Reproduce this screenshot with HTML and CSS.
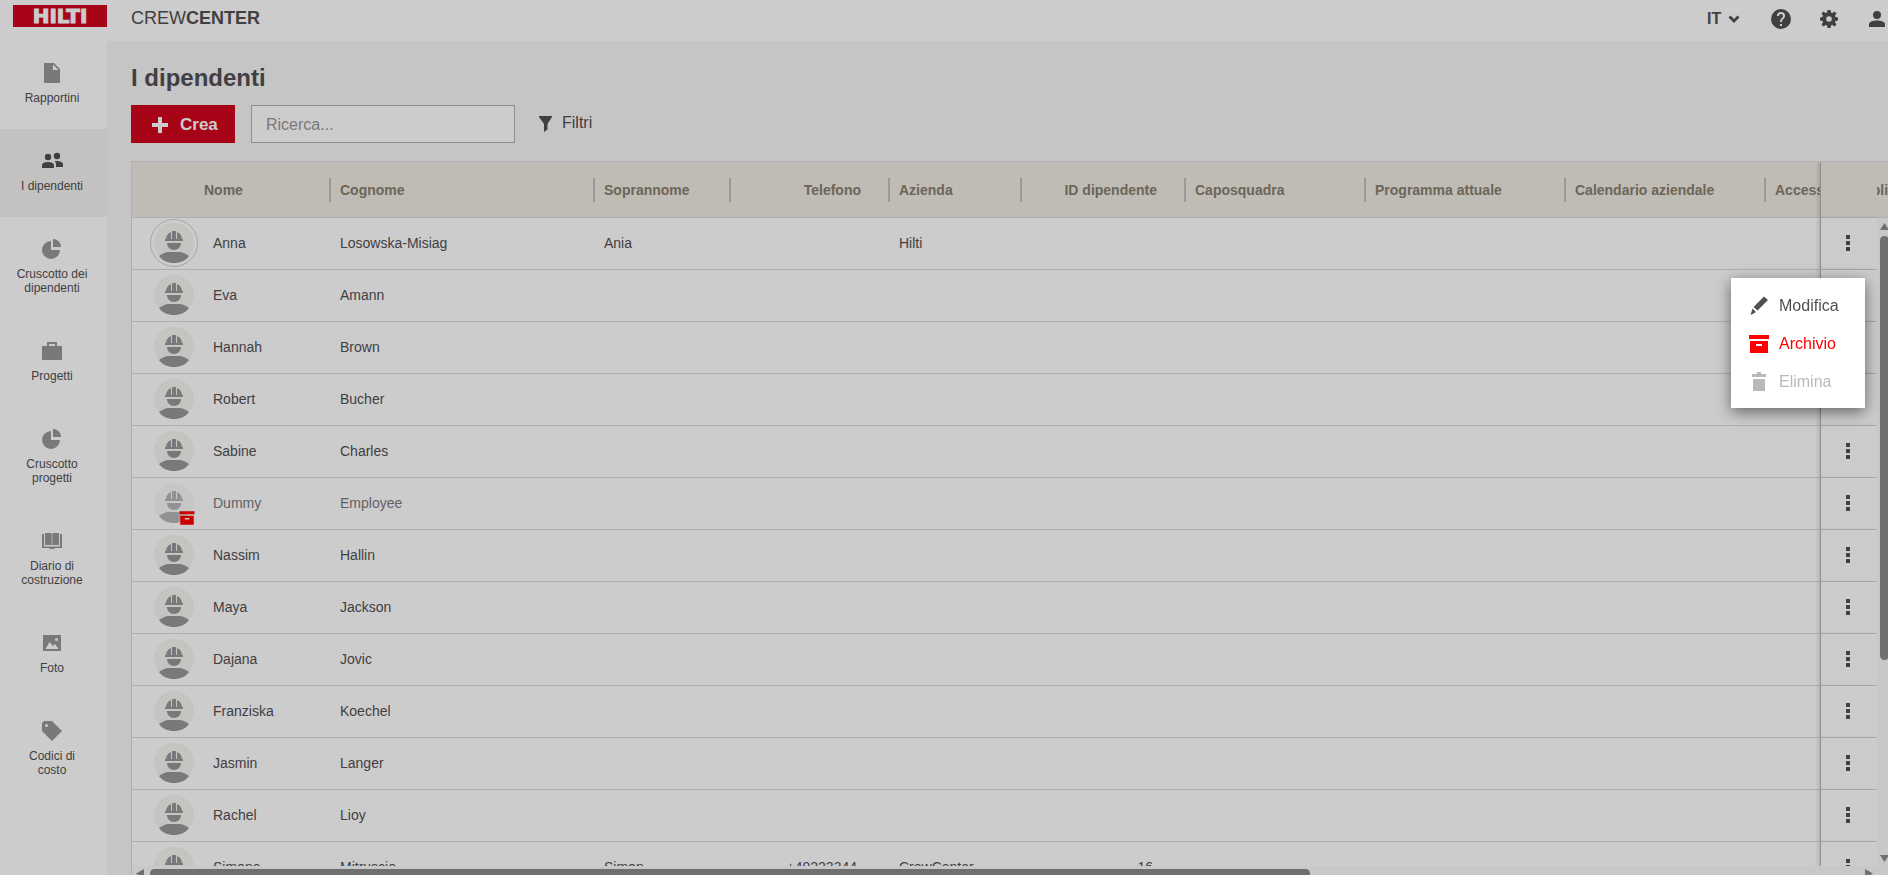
FILE: index.html
```html
<!DOCTYPE html>
<html lang="it">
<head>
  <meta charset="UTF-8">
  <meta name="viewport" content="width=device-width, initial-scale=1.0">
  <title>CrewCenter</title>
  <link rel="stylesheet" href="styles.css">
</head>
<body>

  <!-- Icone condivise -->
  <svg class="sprite" aria-hidden="true">
    <symbol id="avatar" viewBox="0 0 40 40">
      <circle cx="20" cy="20" r="20" fill="#f5f5f2"/>
      <path d="M12 16c.2-3 2-5.500 4-6.500h2V8h4v1.500h2c2 1 3.800 3.500 4 6.500h1v2H11v-2z" fill="#9a979b"/>
      <path d="M17.500 9v7M22.500 9v7" stroke="#f5f5f2" stroke-width="1"/>
      <path d="M13 20h14c0 4-3 7-7 7s-7-3-7-7z" fill="#9a979b"/>
      <path d="M5 33c3-2 7-4 9-4h12c2 0 6 2 9 4-3 4.500-9 7-15 7S8 37.500 5 33z" fill="#9a979b"/>
    </symbol>
    <symbol id="pie" viewBox="0 0 24 24">
      <path d="M11 4v9h9a9 9 0 1 1-9-9z"/><path d="M13 2a8 8 0 0 1 8 8h-8z"/>
    </symbol>
    <symbol id="archive" viewBox="0 0 24 24">
      <path d="M2 3h20v4H2z"/><path d="M3 9h18v12H3zm6 3v2h6v-2z" fill-rule="evenodd"/>
    </symbol>
    <symbol id="dots" viewBox="0 0 24 24">
      <path d="M10 4h4v4h-4zM10 10h4v4h-4zM10 16h4v4h-4z"/>
    </symbol>
  </svg>

  <div class="app">
    <header class="topbar">
      <a class="logo" href="#">HILTI</a>
      <div class="brand">CREW<b>CENTER</b></div>
      <div class="tools">
        <div class="lang">
          <select aria-label="Lingua"><option>IT</option></select>
          <svg class="chevron" viewBox="0 0 14 14"><path d="M2.500 4.500L7 9l4.500-4.500" fill="none" stroke="currentColor" stroke-width="2.800"/></svg>
        </div>
        <button class="tool" aria-label="Aiuto">
          <svg class="icon" viewBox="0 0 24 24"><path d="M12 2a10 10 0 1 0 0 20 10 10 0 0 0 0-20zm1 17h-2v-2h2zm2.070-7.750l-.9.920C13.450 12.900 13 13.500 13 15h-2v-.5c0-1.100.450-2.100 1.170-2.830l1.240-1.260A2 2 0 1 0 10 9H8a4 4 0 1 1 8 0c0 .880-.360 1.680-.930 2.250z"/></svg>
        </button>
        <button class="tool" aria-label="Impostazioni">
          <svg class="icon" viewBox="0 0 24 24"><path fill-rule="evenodd" d="M10.500 3h3l.5 2.600 1.300.5 2.200-1.500 2 2-1.500 2.200.5 1.200 2.500.5v3l-2.500.5-.5 1.200 1.500 2.200-2 2-2.200-1.500-1.300.5-.5 2.600h-3l-.5-2.600-1.300-.5-2.200 1.500-2-2L6 15.200 5.500 14 3 13.500v-3l2.500-.5.5-1.200-1.500-2.200 2-2 2.200 1.500 1.300-.5zM12 9.200a2.800 2.800 0 1 0 0 5.600 2.800 2.800 0 0 0 0-5.600z"/></svg>
        </button>
        <button class="tool" aria-label="Profilo">
          <svg class="icon" viewBox="0 0 24 24"><circle cx="12" cy="8" r="4"/><path d="M4 20v-3c0-2 4-3.500 8-3.500s8 1.500 8 3.500v3z"/></svg>
        </button>
      </div>
    </header>

    <nav class="sidebar">
      <a href="#" class="nav-item">
        <svg class="icon" viewBox="0 0 24 24"><path fill-rule="evenodd" d="M4 2h10l6 6v14H4zm9 1.500V9h5.500z"/></svg>
        <span>Rapportini</span>
      </a>
      <a href="#" class="nav-item active">
        <svg class="icon" viewBox="0 0 24 24"><circle cx="8" cy="8" r="3.200"/><circle cx="17" cy="7" r="3.200"/><path d="M2 19v-3c0-2 3-3 6-3s6 1 6 3v3zM14.500 12c4-.5 8.500.5 8.500 3v3h-7v-2.500c0-1.500-.5-2.500-1.500-3.500z"/></svg>
        <span>I dipendenti</span>
      </a>
      <a href="#" class="nav-item">
        <svg class="icon"><use href="#pie"/></svg>
        <span>Cruscotto dei dipendenti</span>
      </a>
      <a href="#" class="nav-item">
        <svg class="icon" viewBox="0 0 24 24"><path fill-rule="evenodd" d="M7 3h10v4h5v14H2V7h5zm2 2v2h6V5z"/></svg>
        <span>Progetti</span>
      </a>
      <a href="#" class="nav-item">
        <svg class="icon"><use href="#pie"/></svg>
        <span>Cruscotto progetti</span>
      </a>
      <a href="#" class="nav-item">
        <svg class="icon" viewBox="0 0 24 24"><path d="M5 4h6l.7.7V16H5zM19 4h-6l-.7.700V16H19zM2 5h2v12.500h16V5h2v14h-7l-1 1h-4l-1-1H2z"/></svg>
        <span>Diario di costruzione</span>
      </a>
      <a href="#" class="nav-item">
        <svg class="icon" viewBox="0 0 24 24"><path fill-rule="evenodd" d="M3 4h18v16H3zm2.500 14h13L15 13l-2 2-3.500-4zM16.500 7a1.500 1.500 0 1 0 0 3 1.500 1.500 0 0 0 0-3z"/></svg>
        <span>Foto</span>
      </a>
      <a href="#" class="nav-item">
        <svg class="icon" viewBox="0 0 24 24"><path fill-rule="evenodd" d="M4 2h8l10 10-10 10L2 12V4zm2.500 3a1.500 1.500 0 1 0 0 3 1.500 1.500 0 0 0 0-3z"/></svg>
        <span>Codici di costo</span>
      </a>
    </nav>

    <main class="content">
      <h1>I dipendenti</h1>

      <div class="toolbar">
        <button class="btn-create">
          <svg class="plus" viewBox="0 0 16 16"><path d="M6 0h4v6h6v4h-6v6H6v-6H0V6h6z"/></svg>
          Crea
        </button>
        <input class="search" type="text" placeholder="Ricerca..." aria-label="Ricerca">
        <button class="btn-filter">
          <svg class="icon" viewBox="0 0 24 24"><path d="M6 5h13v1l-4.500 7v5.500L11 21v-8L6 6z"/></svg>
          Filtri
        </button>
      </div>

      <div class="grid">
        <div class="grid-view">
          <table>
            <colgroup>
              <col class="w-name"><col class="w-surname"><col class="w-nick"><col class="w-phone"><col class="w-company">
              <col class="w-id"><col class="w-foreman"><col class="w-wide"><col class="w-wide"><col class="w-wide"><col class="w-menu">
            </colgroup>
            <thead>
              <tr>
                <th class="first">Nome</th>
                <th>Cognome</th>
                <th>Soprannome</th>
                <th class="num">Telefono</th>
                <th>Azienda</th>
                <th class="num">ID dipendente</th>
                <th>Caposquadra</th>
                <th>Programma attuale</th>
                <th>Calendario aziendale</th>
                <th>Accesso all'applicazione</th>
                <th class="pinned"></th>
              </tr>
            </thead>
            <tbody>
              <tr>
                <td><div class="person"><span class="avatar ring"><svg><use href="#avatar"/></svg></span>Anna</div></td>
                <td>Losowska-Misiag</td><td>Ania</td><td></td><td>Hilti</td><td></td><td></td><td></td><td></td><td></td>
                <td class="pinned"><button aria-label="Azioni"><svg class="icon"><use href="#dots"/></svg></button></td>
              </tr>
              <tr>
                <td><div class="person"><span class="avatar"><svg><use href="#avatar"/></svg></span>Eva</div></td>
                <td>Amann</td><td></td><td></td><td></td><td></td><td></td><td></td><td></td><td></td>
                <td class="pinned"><button aria-label="Azioni"><svg class="icon"><use href="#dots"/></svg></button></td>
              </tr>
              <tr>
                <td><div class="person"><span class="avatar"><svg><use href="#avatar"/></svg></span>Hannah</div></td>
                <td>Brown</td><td></td><td></td><td></td><td></td><td></td><td></td><td></td><td></td>
                <td class="pinned"><button aria-label="Azioni"><svg class="icon"><use href="#dots"/></svg></button></td>
              </tr>
              <tr>
                <td><div class="person"><span class="avatar"><svg><use href="#avatar"/></svg></span>Robert</div></td>
                <td>Bucher</td><td></td><td></td><td></td><td></td><td></td><td></td><td></td><td></td>
                <td class="pinned"><button aria-label="Azioni"><svg class="icon"><use href="#dots"/></svg></button></td>
              </tr>
              <tr>
                <td><div class="person"><span class="avatar"><svg><use href="#avatar"/></svg></span>Sabine</div></td>
                <td>Charles</td><td></td><td></td><td></td><td></td><td></td><td></td><td></td><td></td>
                <td class="pinned"><button aria-label="Azioni"><svg class="icon"><use href="#dots"/></svg></button></td>
              </tr>
              <!-- Dipendente archiviato -->
              <tr class="archived">
                <td><div class="person"><span class="avatar"><svg><use href="#avatar"/></svg><svg class="badge"><use href="#archive"/></svg></span>Dummy</div></td>
                <td>Employee</td><td></td><td></td><td></td><td></td><td></td><td></td><td></td><td></td>
                <td class="pinned"><button aria-label="Azioni"><svg class="icon"><use href="#dots"/></svg></button></td>
              </tr>
              <tr>
                <td><div class="person"><span class="avatar"><svg><use href="#avatar"/></svg></span>Nassim</div></td>
                <td>Hallin</td><td></td><td></td><td></td><td></td><td></td><td></td><td></td><td></td>
                <td class="pinned"><button aria-label="Azioni"><svg class="icon"><use href="#dots"/></svg></button></td>
              </tr>
              <tr>
                <td><div class="person"><span class="avatar"><svg><use href="#avatar"/></svg></span>Maya</div></td>
                <td>Jackson</td><td></td><td></td><td></td><td></td><td></td><td></td><td></td><td></td>
                <td class="pinned"><button aria-label="Azioni"><svg class="icon"><use href="#dots"/></svg></button></td>
              </tr>
              <tr>
                <td><div class="person"><span class="avatar"><svg><use href="#avatar"/></svg></span>Dajana</div></td>
                <td>Jovic</td><td></td><td></td><td></td><td></td><td></td><td></td><td></td><td></td>
                <td class="pinned"><button aria-label="Azioni"><svg class="icon"><use href="#dots"/></svg></button></td>
              </tr>
              <tr>
                <td><div class="person"><span class="avatar"><svg><use href="#avatar"/></svg></span>Franziska</div></td>
                <td>Koechel</td><td></td><td></td><td></td><td></td><td></td><td></td><td></td><td></td>
                <td class="pinned"><button aria-label="Azioni"><svg class="icon"><use href="#dots"/></svg></button></td>
              </tr>
              <tr>
                <td><div class="person"><span class="avatar"><svg><use href="#avatar"/></svg></span>Jasmin</div></td>
                <td>Langer</td><td></td><td></td><td></td><td></td><td></td><td></td><td></td><td></td>
                <td class="pinned"><button aria-label="Azioni"><svg class="icon"><use href="#dots"/></svg></button></td>
              </tr>
              <tr>
                <td><div class="person"><span class="avatar"><svg><use href="#avatar"/></svg></span>Rachel</div></td>
                <td>Lioy</td><td></td><td></td><td></td><td></td><td></td><td></td><td></td><td></td>
                <td class="pinned"><button aria-label="Azioni"><svg class="icon"><use href="#dots"/></svg></button></td>
              </tr>
              <tr>
                <td><div class="person"><span class="avatar"><svg><use href="#avatar"/></svg></span>Simone</div></td>
                <td>Mitruscio</td><td>Simon</td><td class="num">+49223344</td><td>CrewCenter</td><td class="num">16</td><td></td><td></td><td></td><td></td>
                <td class="pinned"><button aria-label="Azioni"><svg class="icon"><use href="#dots"/></svg></button></td>
              </tr>
            </tbody>
          </table>
          <div class="vscroll">
            <i class="arrow up"></i><i class="thumb"></i><i class="arrow down"></i>
          </div>
        </div>
        <div class="hscroll">
          <i class="arrow left"></i><i class="thumb"></i><i class="arrow right"></i>
        </div>
      </div>
    </main>
  </div>

  <!-- Overlay -->
  <div class="overlay"></div>

  <!-- Menu azioni -->
  <div class="menu">
    <button>
      <svg class="icon" viewBox="0 0 24 24"><path d="M17 2.500l4 3.500L10.500 16.500l-4-3.500zM5.500 14.500l3.500 3.500-2 1.200L3.500 21z"/></svg>
      Modifica
    </button>
    <button class="danger">
      <svg class="icon"><use href="#archive"/></svg>
      Archivio
    </button>
    <button disabled>
      <svg class="icon" viewBox="0 0 24 24"><path d="M5 4h5V2h4v2h5v3H5zM6 9h12v12H6z"/></svg>
      Elimina
    </button>
  </div>

</body>
</html>
```
FILE: styles.css
```css
* {
  box-sizing: border-box;
}

body {
  margin: 0;
  overflow: hidden;
  font-family: "Liberation Sans", Arial, sans-serif;
  font-size: 14px;
  color: #524f53;
}

button {
  border: none;
  background: none;
  padding: 0;
  font: inherit;
  color: inherit;
  cursor: pointer;
}

.sprite {
  display: none;
}

.icon {
  display: block;
  flex: none;
  width: 24px;
  height: 24px;
  fill: currentColor;
}

/* Layout */
.app {
  display: grid;
  grid-template-columns: 107px minmax(0, 1fr);
  grid-template-rows: 41px minmax(0, 1fr);
  height: 100vh;
  background: #fff;
}

/* Barra superiore */
.topbar {
  grid-column: 1 / 3;
  display: flex;
  align-items: flex-start;
  padding-top: 5px;
}

.logo {
  display: flex;
  align-items: center;
  justify-content: center;
  width: 94px;
  height: 22px;
  margin-left: 13px;
  background: #d2051e;
  color: #fff;
  font: bold 20px/22px "DejaVu Sans", sans-serif;
  text-decoration: none;
  -webkit-text-stroke: 1px #fff;
}

.brand {
  margin-left: 24px;
  font-size: 18px;
  line-height: 26px;
}

.tools {
  display: flex;
  align-items: center;
  gap: 24px;
  height: 28px;
  margin: 0 -1px 0 auto;
}

.lang {
  display: flex;
  align-items: center;
}
.lang select {
  appearance: none;
  width: 20px;
  padding: 0;
  border: none;
  background: none;
  color: inherit;
  font: bold 16px/20px "Liberation Sans", Arial, sans-serif;
}

.chevron {
  width: 14px;
  height: 14px;
  margin-right: 4px;
}

/* Menu laterale */
.sidebar {
  overflow: hidden;
}

.nav-item {
  display: flex;
  flex-direction: column;
  align-items: center;
  gap: 6px;
  padding: 20px 15px 24px 12px;
  font-size: 12px;
  line-height: 14px;
  text-align: center;
  color: #524f53;
  text-decoration: none;
}
.nav-item .icon {
  color: #9a979b;
}
.nav-item span {
  width: 76px;
}
.nav-item.active {
  background: #f4f3f0;
}
.nav-item.active .icon {
  color: #524f53;
}

/* Contenuto */
.content {
  display: flex;
  flex-direction: column;
  min-height: 0;
  padding: 20px 0 0 24px;
  background: #f7f7f7;
}

h1 {
  margin: 0 0 10px;
  font-size: 24px;
  line-height: 34px;
}

.toolbar {
  display: flex;
  gap: 16px;
  margin-bottom: 18px;
  font-size: 16px;
}

.btn-create {
  display: flex;
  align-items: center;
  gap: 12px;
  width: 104px;
  height: 38px;
  padding: 1px 0 0 21px;
  background: #d2051e;
  color: #fff;
  font-size: 17px;
  font-weight: bold;
}

.plus {
  width: 16px;
  height: 16px;
  fill: #fff;
}

.search {
  width: 264px;
  height: 38px;
  padding: 2px 14px 0;
  border: 1px solid #b4b3b5;
  background: #fff;
  font: inherit;
}
.search::placeholder {
  color: #9a979b;
}

.btn-filter {
  display: flex;
  align-items: center;
  gap: 5px;
  padding: 0 0 2px 2px;
}

/* Tabella */
.grid {
  display: flex;
  flex: 1;
  flex-direction: column;
  min-height: 0;
  margin: 0 -4px -6px 0;
  border-top: 1px solid #dcdcda;
  border-left: 1px solid #dcdcda;
}

.grid-view {
  position: relative;
  flex: 1;
  min-height: 0;
  overflow: hidden;
  background: #fff;
}

table {
  table-layout: fixed;
  width: 1892px;
  border-collapse: separate;
  border-spacing: 0;
}

.w-name { width: 200px; }
.w-surname { width: 264px; }
.w-nick { width: 136px; }
.w-phone { width: 159px; }
.w-company { width: 132px; }
.w-id { width: 164px; }
.w-foreman { width: 180px; }
.w-wide { width: 200px; }
.w-menu { width: 57px; }

th {
  position: relative;
  height: 56px;
  padding: 0 0 0 8px;
  border-bottom: 1px solid #dcdcda;
  background: #efeae3;
  color: #887f6e;
  text-align: left;
  white-space: nowrap;
}
th.first {
  padding-left: 72px;
}
th.num {
  padding-right: 30px;
  text-align: right;
}

/* Separatore tra le colonne */
th:not(.pinned)::after {
  content: "";
  position: absolute;
  top: 16px;
  right: 1px;
  width: 2px;
  height: 24px;
  background: #c2bfbd;
}

td {
  height: 52px;
  padding: 0 0 1px 8px;
  border-bottom: 1px solid #dcdcdc;
}
td.num {
  padding-right: 34px;
  text-align: right;
}

th.pinned,
td.pinned {
  position: sticky;
  right: 15px;
  padding: 0 2px 1px 0;
  border-left: 1px solid #b2b2b2;
  box-shadow: -2px 0 4px rgba(0, 0, 0, 0.12);
}
td.pinned {
  background: #fff;
}
.pinned button {
  display: block;
  margin: 0 auto;
}

.person {
  display: flex;
  align-items: center;
  gap: 15px;
  height: 50px;
  padding-left: 10px;
}

.avatar {
  position: relative;
  width: 48px;
  height: 48px;
  padding: 4px;
}
.avatar svg {
  display: block;
  width: 40px;
  height: 40px;
}
.avatar.ring {
  border: 1px solid #d0d0d0;
  border-radius: 50%;
  padding: 3px;
}
.avatar .badge {
  position: absolute;
  right: 2px;
  bottom: 0;
  width: 18px;
  height: 18px;
  fill: #f00;
  filter: drop-shadow(0 0 1px #fff);
}

.archived td:not(.pinned) {
  color: #7c797d;
}
.archived use[href="#avatar"] {
  opacity: 0.7;
}

/* Barre di scorrimento */
.vscroll,
.hscroll {
  display: flex;
  align-items: center;
  background: #fafafa;
}
.vscroll {
  position: absolute;
  top: 56px;
  right: 0;
  bottom: 0;
  flex-direction: column;
  width: 15px;
  padding: 5px 0 4px;
}
.hscroll {
  flex: none;
  height: 15px;
  padding: 0 19px 0 4px;
}

.thumb {
  border-radius: 5px;
  background: #8b8b8b;
}
.vscroll .thumb {
  width: 9px;
  height: 66.3%;
  margin: 6px 0 auto;
}
.hscroll .thumb {
  width: 66.8%;
  height: 9px;
  margin: 0 auto 0 6px;
}

.arrow {
  width: 9px;
  height: 7px;
  background: #8b8b8b;
}
.up {
  clip-path: polygon(50% 0, 100% 100%, 0 100%);
}
.down {
  clip-path: polygon(0 0, 100% 0, 50% 100%);
}
.left,
.right {
  width: 8px;
  height: 9px;
}
.left {
  clip-path: polygon(100% 0, 100% 100%, 0 50%);
}
.right {
  clip-path: polygon(0 0, 100% 50%, 0 100%);
}

/* Overlay */
.overlay {
  position: fixed;
  top: 0;
  left: 0;
  width: 100%;
  height: 100%;
  background-color: rgba(0, 0, 0, 0.2);
}

/* Menu azioni */
.menu {
  position: absolute;
  top: 278px;
  right: 23px;
  width: 134px;
  padding: 9px 0 7px;
  background: #fff;
  box-shadow: 0 4px 14px rgba(0, 0, 0, 0.5);
}
.menu button {
  display: flex;
  align-items: center;
  gap: 8px;
  width: 100%;
  height: 38px;
  padding-left: 16px;
  font-size: 16px;
}
.menu .danger {
  color: #f00;
}
.menu button:disabled {
  color: #b9b9b9;
}
```
